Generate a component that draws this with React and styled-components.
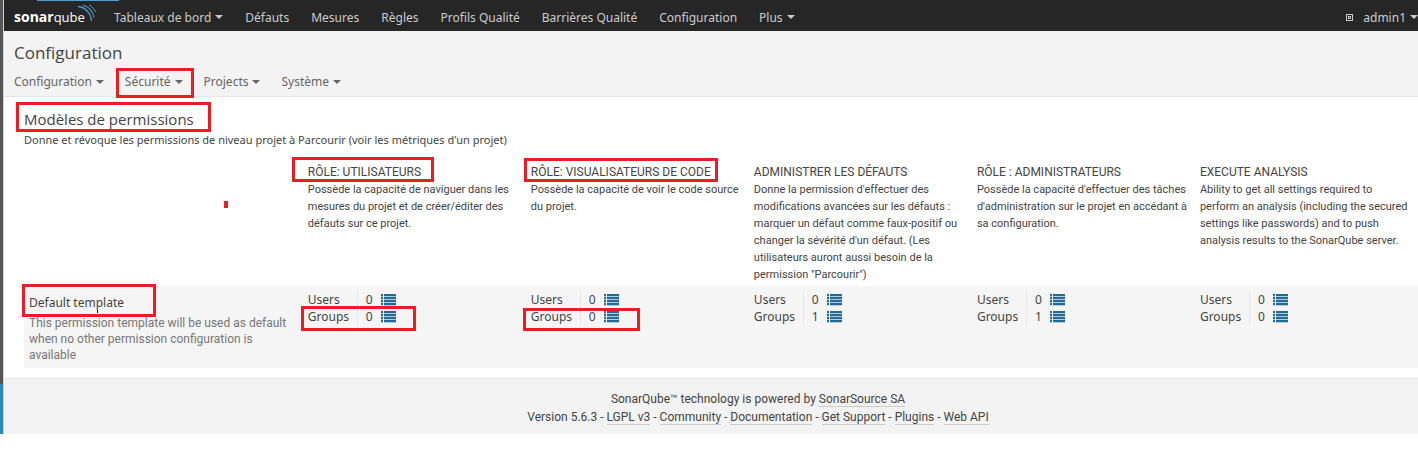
import React from "react";
import styled, { createGlobalStyle } from "styled-components";

const GlobalStyle = createGlobalStyle`
  * { box-sizing: border-box; }
  body {
    margin: 0;
    background: #fff;
    color: #444;
    font-family: "Noto Sans", "Open Sans", sans-serif;
    font-size: 12px;
    line-height: 17px;
  }
  h1, h2, p { margin: 0; font-weight: 400; }
  a { color: inherit; text-decoration: none; }
  button {
    padding: 0;
    border: 0;
    background: none;
    color: inherit;
    font: inherit;
    cursor: pointer;
  }
`;

const Frame = styled.div`
  position: relative;
  display: flex;
`;

const WindowEdge = styled.div`
  display: flex;
  flex-direction: column;
  flex: none;
  width: 4px;
  border-right: 1px solid #d4d4d4;
`;

const EdgeDark = styled.div`
  flex: 1;
  background: #555;
`;

const EdgeBlue = styled.div`
  height: 50px;
  background: #2f86bd;
`;

const Page = styled.div`
  flex: 1;
  min-width: 0;
`;

const Navbar = styled.nav`
  position: relative;
  display: flex;
  align-items: center;
  height: 31px;
  padding: 3px 0 0 10px;
  background: #262626;
  color: #ccc;
  &::before {
    content: "";
    position: absolute;
    top: 0;
    left: 33px;
    width: 82px;
    height: 1px;
    background: #4b9fd5;
  }
`;

const LogoLink = styled.a`
  display: block;
  position: relative;
  width: 84px;
  margin-right: 16px;
  color: #fff;
  font-family: "Open Sans", sans-serif;
  font-size: 14px;
  line-height: 20px;
  b { font-weight: 700; }
  span { font-size: 13px; font-weight: 400; }
`;

const Waves = styled.svg`
  position: absolute;
  top: -3px;
  left: 63px;
`;

const NavList = styled.div`
  display: flex;
  gap: 22px;
`;

const NavUser = styled.div`
  display: flex;
  align-items: center;
  gap: 10px;
  margin-left: auto;
`;

const MenuButton = styled.button`
  position: relative;
  display: inline-flex;
  align-items: center;
  gap: 4px;
  white-space: nowrap;
`;

const Caret = styled.span`
  border: 4px solid transparent;
  border-top-color: currentColor;
  border-bottom: 0;
`;

const Header = styled.header`
  padding: 10px 10px 6px;
  border-bottom: 1px solid #e6e6e6;
  background: #f3f3f3;
`;

const PageTitle = styled.h1`
  font-family: "Open Sans", sans-serif;
  font-size: 17px;
  line-height: 24px;
`;

const SubNav = styled.nav`
  display: flex;
  gap: 21px;
  margin-top: 8px;
  color: #666;
`;

const Main = styled.main`
  padding: 10px 0 10px 20px;
`;

const SectionTitle = styled.h2`
  position: relative;
  font-family: "Open Sans", sans-serif;
  font-size: 15px;
  line-height: 24px;
`;

const Intro = styled.p`
  font-size: 11px;
  line-height: 18px;
`;

const Matrix = styled.table`
  width: 100%;
  margin-top: 14px;
  border-collapse: collapse;
  table-layout: fixed;
`;

const RoleHead = styled.th`
  position: relative;
  width: 16%;
  padding: 0 5px 3px;
  font-family: Roboto, sans-serif;
  font-size: 11px;
  font-weight: 400;
  text-align: left;
  vertical-align: top;
`;

const CornerCell = styled.td`
  position: relative;
  width: 20%;
`;

const RoleName = styled.div`
  font-size: 12px;
  line-height: 18px;
  text-transform: uppercase;
  white-space: nowrap;
`;

const TemplateRow = styled.tr`
  background: #f5f5f5;
`;

const TemplateHead = styled.th`
  position: relative;
  padding: 5px;
  font-weight: 400;
  text-align: left;
  vertical-align: top;
`;

const TemplateName = styled.a`
  display: block;
  font-size: 12px;
  line-height: 24px;
`;

const TemplateNote = styled.p`
  color: #777;
  font-family: Roboto, sans-serif;
  font-size: 12px;
  line-height: 16px;
`;

const CountCell = styled.td`
  position: relative;
  padding: 5px;
  vertical-align: top;
`;

const CountLine = styled.div`
  display: flex;
  align-items: center;
  height: 17px;
`;

const CountLabel = styled.span`
  width: 50px;
  border-right: 1px solid #e6e6e6;
`;

const CountValue = styled.span`
  width: 23px;
  padding-left: 8px;
`;

const ListButton = styled.button`
  display: flex;
  margin-top: 1px;
  color: #236a97;
`;

const Footer = styled.footer`
  padding: 11px 0 8px 94px;
  border-top: 1px solid #e6e6e6;
  background: #f3f3f3;
  font-family: Roboto, sans-serif;
  font-size: 12px;
  line-height: 18px;
  text-align: center;
`;

const FooterLink = styled.a`
  border-bottom: 1px solid #ccc;
`;

const Marker = styled.span`
  position: absolute;
  z-index: 1;
  top: ${(p) => p.$top}px;
  left: ${(p) => p.$left}px;
  width: ${(p) => p.$width}px;
  height: ${(p) => p.$height}px;
  border: 3px solid #ed1c24;
  pointer-events: none;
`;

const Speck = styled.span`
  position: absolute;
  top: ${(p) => p.$top}px;
  left: ${(p) => p.$left}px;
  width: ${(p) => p.$width}px;
  height: ${(p) => p.$height}px;
  background: ${(p) => p.$color};
`;

const ListIcon = () => (
  <svg width="15" height="12" viewBox="0 0 15 12" fill="currentColor" aria-hidden="true">
    <path d="M0 0h2v12H0zM3 0h12v12H3z" opacity="0.3" />
    {[0, 3, 6, 9].map((y) => (
      <g key={y}>
        <rect x="0" y={y} width="2" height="2" />
        <rect x="3" y={y} width="12" height="2" />
      </g>
    ))}
  </svg>
);

const Menu = ({ label, caret, children }) => (
  <MenuButton type="button">
    {label}
    {caret && <Caret />}
    {children}
  </MenuButton>
);

const navItems = [
  ["Tableaux de bord", true],
  ["Défauts"],
  ["Mesures"],
  ["Règles"],
  ["Profils Qualité"],
  ["Barrières Qualité"],
  ["Configuration"],
  ["Plus", true],
];

const roles = [
  {
    name: "Rôle: Utilisateurs",
    text: "Possède la capacité de naviguer dans les mesures du projet et de créer/éditer des défauts sur ce projet.",
    users: 0,
    groups: 0,
    headMark: { $top: -6, $left: -11, $width: 142, $height: 25 },
    groupMark: { $top: 20, $left: -2, $width: 115, $height: 25 },
  },
  {
    name: "Rôle: Visualisateurs de code",
    text: "Possède la capacité de voir le code source du projet.",
    users: 0,
    groups: 0,
    headMark: { $top: -5, $left: -2, $width: 194, $height: 24 },
    groupMark: { $top: 22, $left: -3, $width: 117, $height: 23 },
  },
  {
    name: "Administrer les défauts",
    text: "Donne la permission d'effectuer des modifications avancées sur les défauts : marquer un défaut comme faux-positif ou changer la sévérité d'un défaut. (Les utilisateurs auront aussi besoin de la permission \"Parcourir\")",
    users: 0,
    groups: 1,
  },
  {
    name: "Rôle : Administrateurs",
    text: "Possède la capacité d'effectuer des tâches d'administration sur le projet en accédant à sa configuration.",
    users: 0,
    groups: 1,
  },
  {
    name: "Execute Analysis",
    text: "Ability to get all settings required to perform an analysis (including the secured settings like passwords) and to push analysis results to the SonarQube server.",
    users: 0,
    groups: 0,
  },
];

const footerLinks = ["LGPL v3", "Community", "Documentation", "Get Support", "Plugins", "Web API"];

const Count = ({ label, value }) => (
  <CountLine>
    <CountLabel>{label}</CountLabel>
    <CountValue>{value}</CountValue>
    <ListButton type="button" aria-label={label}>
      <ListIcon />
    </ListButton>
  </CountLine>
);

export default function App() {
  return (
    <>
      <GlobalStyle />
      <Frame>
        <WindowEdge>
          <EdgeDark />
          <EdgeBlue />
        </WindowEdge>
        <Page>
          <Navbar>
            <LogoLink href="#">
              <b>sonar</b>
              <span>qube</span>
              <Waves width="20" height="18" viewBox="0 0 20 18" fill="none" stroke="#4b9fd5" aria-hidden="true">
                <path d="M1 2.5C8 3 14 9 14.5 17" strokeWidth="1.3" />
                <path d="M6 1C11.500 3 16 7.500 17 13.500" strokeWidth="1.1" />
                <path d="M12 0.800C15 2.500 17.500 5 18.700 8" strokeWidth="1" />
              </Waves>
            </LogoLink>
            <NavList>
              {navItems.map(([label, caret]) => (
                <Menu key={label} label={label} caret={caret} />
              ))}
            </NavList>
            <NavUser>
              <svg width="7" height="7" viewBox="0 0 7 7" fill="none" aria-hidden="true">
                <rect x="0.5" y="0.5" width="6" height="6" stroke="#ccc" />
                <rect x="2" y="2" width="3" height="3" fill="#ccc" />
                <rect x="3" y="3" width="1" height="1" fill="#262626" />
              </svg>
              <Menu label="admin1" caret />
            </NavUser>
          </Navbar>
          <Header>
            <PageTitle>Configuration</PageTitle>
            <SubNav>
              <Menu label="Configuration" caret />
              <Menu label="Sécurité" caret>
                <Marker $top={-5} $left={-9} $width={78} $height={30} />
              </Menu>
              <Menu label="Projects" caret />
              <Menu label="Système" caret />
            </SubNav>
          </Header>
          <Main>
            <SectionTitle>
              Modèles de permissions
              <Marker $top={-5} $left={-8} $width={195} $height={30} />
            </SectionTitle>
            <Intro>Donne et révoque les permissions de niveau projet à Parcourir (voir les métriques d'un projet)</Intro>
            <Matrix>
              <thead>
                <tr>
                  <CornerCell>
                    <Speck $top={38} $left={200} $width={4} $height={7} $color="#ed1c24" />
                  </CornerCell>
                  {roles.map((role) => (
                    <RoleHead key={role.name} scope="col">
                      <RoleName>{role.name}</RoleName>
                      {role.text}
                      {role.headMark && <Marker {...role.headMark} />}
                    </RoleHead>
                  ))}
                </tr>
              </thead>
              <tbody>
                <TemplateRow>
                  <TemplateHead scope="row">
                    <TemplateName href="#">Default template</TemplateName>
                    <TemplateNote>
                      This permission template will be used as default when no other permission configuration is available
                    </TemplateNote>
                    <Speck $top={24} $left={73} $width={1} $height={3} $color="#00c" />
                    <Marker $top={-2} $left={-2} $width={134} $height={33} />
                  </TemplateHead>
                  {roles.map((role) => (
                    <CountCell key={role.name}>
                      <Count label="Users" value={role.users} />
                      <Count label="Groups" value={role.groups} />
                      {role.groupMark && <Marker {...role.groupMark} />}
                    </CountCell>
                  ))}
                </TemplateRow>
              </tbody>
            </Matrix>
          </Main>
          <Footer>
            <div>
              SonarQube™ technology is powered by <FooterLink href="#">SonarSource SA</FooterLink>
            </div>
            <div>
              Version 5.6.3
              {footerLinks.map((link) => (
                <React.Fragment key={link}>
                  {" - "}
                  <FooterLink href="#">{link}</FooterLink>
                </React.Fragment>
              ))}
            </div>
          </Footer>
        </Page>
        <Speck $top={452} $left={384} $width={2} $height={1} $color="#f00" />
      </Frame>
    </>
  );
}
